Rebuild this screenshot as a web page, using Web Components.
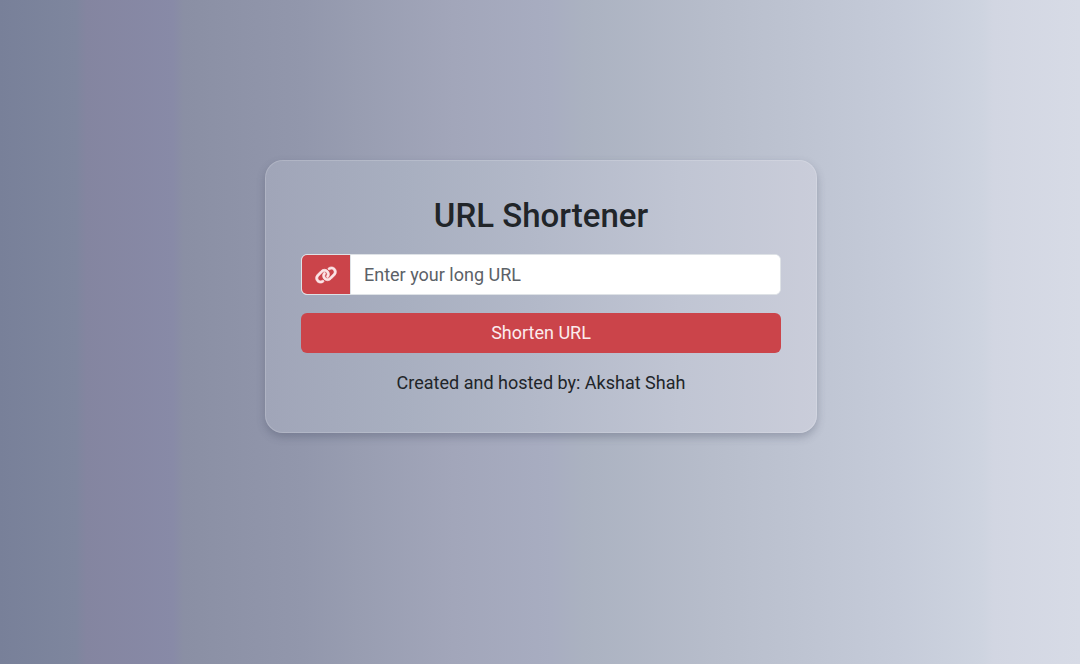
<!DOCTYPE html>
<html lang="en">
<head>
<meta charset="utf-8">
<meta name="viewport" content="width=device-width, initial-scale=1">
<title>URL Shortener</title>
<style>
  html { height: 100%; }
  body {
    margin: 0;
    min-height: 100%;
    font: 18px/28px Roboto, "Liberation Sans", sans-serif;
    color: #212529;
    background: linear-gradient(to right,
      #788099 0%, #7e869e 7%, #8485a0 8%, #888aa7 16%,
      #8a8fa4 17%, #9297ac 28%, #989db1 33%, #a2a6ba 42%, #a8adc1 51%,
      #abb2c1 54%, #b7bdcb 66%, #c5cbd9 83%, #ced4e0 91%, #d2d6e2 92%, #d7dbe6 100%);
  }
</style>
</head>
<body>
<shortener-page>
  <glass-card>
    <shorten-form heading="URL Shortener" placeholder="Enter your long URL" action-label="Shorten URL"></shorten-form>
    <credit-line>Created and hosted by: Akshat Shah</credit-line>
  </glass-card>
</shortener-page>
<script>
const define = (name, html, setup) => customElements.define(name, class extends HTMLElement {
  constructor() {
    super();
    this.attachShadow({ mode: "open" }).innerHTML = html;
  }
  connectedCallback() { if (setup) setup(this, this.shadowRoot); }
});

define("shortener-page", `
  <style>
    :host { display: block; padding: 160px 16px 16px 18px; }
    main { display: flex; justify-content: center; }
  </style>
  <main><slot></slot></main>`);

define("glass-card", `
  <style>
    :host {
      display: flex; flex-direction: column; gap: 16px;
      box-sizing: border-box; width: 100%; max-width: 552px; padding: 35px;
      border: 1px solid rgba(255, 255, 255, .16); border-radius: 18px;
      background: linear-gradient(to right, #a0a5b8, #a8afc0 25%, #b3b9c9 50%, #c0c5d3 75%, #cacdda) border-box;
      box-shadow: 0 4px 9px rgba(60, 66, 90, .3);
    }
  </style>
  <slot></slot>`);

define("link-icon", `
  <style>
    :host { display: inline-flex; }
    svg { width: 22px; height: 18px; fill: currentColor; stroke: currentColor; stroke-width: 20; overflow: visible; }
  </style>
  <svg viewBox="0 0 640 512" aria-hidden="true"><path d="M579.8 267.7c56.5-56.5 56.5-148 0-204.5c-50-50-128.8-56.5-186.3-15.4l-1.6 1.1c-14.4 10.3-17.7 30.3-7.4 44.6s30.3 17.7 44.6 7.4l1.6-1.1c32.1-22.9 76-19.3 103.8 8.6c31.5 31.5 31.5 82.5 0 114L422.3 334.8c-31.5 31.5-82.5 31.5-114 0c-27.9-27.9-31.5-71.8-8.6-103.8l1.1-1.6c10.3-14.4 6.9-34.4-7.4-44.6s-34.4-6.9-44.6 7.4l-1.1 1.6C206.5 251.2 213 330 263 380c56.5 56.5 148 56.5 204.5 0L579.8 267.7zM60.2 244.3c-56.5 56.5-56.5 148 0 204.5c50 50 128.8 56.5 186.3 15.4l1.6-1.1c14.4-10.3 17.7-30.3 7.4-44.6s-30.3-17.7-44.6-7.4l-1.6 1.1c-32.1 22.9-76 19.3-103.8-8.6C74 372 74 321 105.5 289.5L217.7 177.2c31.5-31.5 82.5-31.5 114 0c27.9 27.9 31.5 71.8 8.6 103.9l-1.1 1.6c-10.3 14.4-6.9 34.4 7.4 44.6s34.4 6.9 44.6-7.4l1.1-1.6C433.5 260.8 427 182 377 132c-56.5-56.5-148-56.5-204.5 0L60.2 244.3z"/></svg>`);

define("shorten-form", `
  <style>
    :host { display: block; }
    form { display: flex; flex-direction: column; gap: 18px; }
    h1 { margin: 0; font-size: 33px; line-height: 40px; font-weight: 500; text-align: center; }
    .group {
      display: flex; height: 41px; box-sizing: border-box; overflow: hidden;
      border: 1px solid #dee2e6; border-radius: 6px; background: #fff;
    }
    label {
      display: flex; align-items: center; justify-content: center;
      box-sizing: border-box; width: 49px; flex: none; background: #cb444a; color: #fbe4e6;
      border-right: 1px solid #dee2e6;
    }
    input {
      flex: 1; min-width: 0; margin: 0; padding: 0 13px; border: 0; outline: 0;
      background: #fff; color: inherit; font: inherit;
    }
    input::placeholder { color: #5c6167; opacity: 1; }
    button {
      height: 40px; padding: 0 12px; border: 0; border-radius: 6px;
      background: #cb444a; color: #fbecee; font: inherit; cursor: pointer;
    }
  </style>
  <form>
    <h1></h1>
    <div class="group">
      <label for="url"><link-icon></link-icon></label>
      <input id="url" type="url">
    </div>
    <button type="button"></button>
  </form>`, (host, root) => {
  root.querySelector("h1").textContent = host.getAttribute("heading");
  root.querySelector("button").textContent = host.getAttribute("action-label");
  const input = root.querySelector("input");
  input.placeholder = host.getAttribute("placeholder");
  input.setAttribute("aria-label", input.placeholder);
});

define("credit-line", `
  <style>
    :host { display: block; text-align: center; }
    p { margin: 0; }
  </style>
  <p><slot></slot></p>`);
</script>
</body>
</html>
